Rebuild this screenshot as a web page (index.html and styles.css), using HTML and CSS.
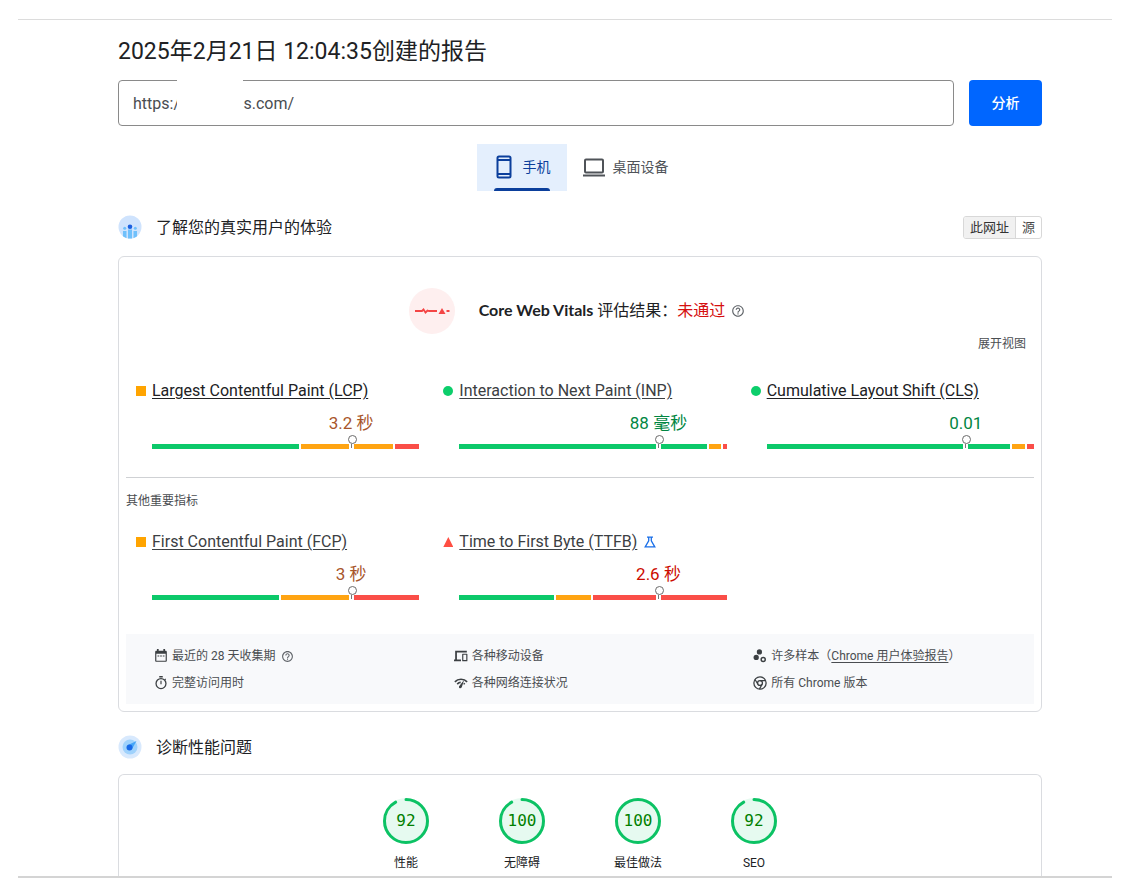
FILE: index.html
```html
<!DOCTYPE html>
<html lang="zh-CN">
<head>
<meta charset="utf-8">
<meta name="viewport" content="width=device-width, initial-scale=1">
<title>PageSpeed Insights</title>
<link rel="stylesheet" href="styles.css">
</head>
<body>
<svg class="defs" aria-hidden="true">
  <symbol id="help" viewBox="0 0 24 24"><path d="M11 18h2v-2h-2v2zm1-16C6.48 2 2 6.48 2 12s4.48 10 10 10 10-4.48 10-10S17.520 2 12 2zm0 18c-4.410 0-8-3.590-8-8s3.590-8 8-8 8 3.590 8 8-3.590 8-8 8zm0-14c-2.210 0-4 1.790-4 4h2c0-1.100.9-2 2-2s2 .9 2 2c0 2-3 1.750-3 5h2c0-2.250 3-2.500 3-5 0-2.210-1.790-4-4-4z"/></symbol>
</svg>
<main class="frame">
  <h1 class="title">2025年2月21日 12:04:35创建的报告</h1>
  <form class="search">
    <div class="field">
      <input class="url" type="text" aria-label="网址" value="https:/&nbsp;&nbsp;&nbsp;&nbsp;&nbsp;&nbsp;&nbsp;&nbsp;&nbsp;&nbsp;&nbsp;&nbsp;&nbsp;&nbsp;&nbsp;&nbsp;s.com/">
      <span class="redact"></span>
    </div>
    <button class="analyze" type="button">分析</button>
  </form>

  <div class="tabs" role="tablist">
    <button class="tab tab-active" type="button" role="tab" aria-selected="true">
      <svg class="tab-icon" viewBox="0 0 24 24" fill="none" stroke="currentColor" stroke-width="2"><rect x="5.500" y="1.500" width="13" height="21" rx="1.500"/><path d="M5.500 5h13M5.500 19h13"/></svg>
      <span>手机</span>
    </button>
    <button class="tab" type="button" role="tab" aria-selected="false">
      <svg class="tab-icon" viewBox="0 0 24 24" fill="none" stroke="currentColor" stroke-width="2"><rect x="3" y="4.500" width="18" height="13" rx="1"/><path d="M1 20.500h22"/></svg>
      <span>桌面设备</span>
    </button>
  </div>

  <header class="section-head">
    <svg class="section-icon" viewBox="0 0 24 24"><defs><clipPath id="disc"><circle cx="12" cy="12" r="11.500"/></clipPath></defs><circle cx="12" cy="12" r="11.500" fill="#cfe3fd"/><g clip-path="url(#disc)" fill="#6fc0fb"><path d="M5 16h3.500v8H5zM10 14.500h4V24h-4zM15.500 16H19v8h-3.500z"/><circle cx="6.700" cy="13.300" r="1.500"/><circle cx="17.300" cy="13.300" r="1.500"/></g><circle cx="12" cy="11.800" r="2.300" fill="#1a5fe0"/></svg>
    <h2 class="section-title">了解您的真实用户的体验</h2>
    <div class="scope">
      <button class="scope-btn scope-on" type="button">此网址</button>
      <button class="scope-btn" type="button">源</button>
    </div>
  </header>

  <section class="card">
    <div class="verdict">
      <svg class="verdict-icon" viewBox="0 0 46 46"><circle cx="23" cy="23" r="23" fill="#feefef"/><path d="M6 23h7l1.500-1.500 2 3 2-2 1.500.5h8" fill="none" stroke="#f44545" stroke-width="1.800"/><path d="M29.500 26l3.500-6 3.500 6z" fill="#f44545"/><path d="M37.500 22h3v2h-3z" fill="#f44545"/></svg>
      <p class="verdict-text"><span class="cwv">Core Web Vitals</span> 评估结果：<span class="fail">未通过</span></p>
      <svg class="help"><use href="#help"/></svg>
    </div>
    <div class="expand-row"><button class="expand" type="button">展开视图</button></div>

    <div class="metrics">
      <article class="metric">
        <i class="mark square"></i>
        <a class="name strong" href="#lcp">Largest Contentful Paint (LCP)</a>
        <div class="value orange">3.2 秒</div>
        <div class="bar"><i class="good" style="flex-grow:147"></i><i class="mid" style="flex-grow:92"></i><i class="bad" style="flex-grow:24"></i><span class="pin"></span></div>
      </article>
      <article class="metric">
        <i class="mark circle"></i>
        <a class="name" href="#inp">Interaction to Next Paint (INP)</a>
        <div class="value green">88 毫秒</div>
        <div class="bar"><i class="good" style="flex-grow:247"></i><i class="mid" style="flex-grow:12"></i><i class="bad" style="flex-grow:4"></i><span class="pin"></span></div>
      </article>
      <article class="metric">
        <i class="mark circle"></i>
        <a class="name strong" href="#cls">Cumulative Layout Shift (CLS)</a>
        <div class="value green">0.01</div>
        <div class="bar"><i class="good" style="flex-grow:243"></i><i class="mid" style="flex-grow:13"></i><i class="bad" style="flex-grow:7"></i><span class="pin"></span></div>
      </article>
    </div>

    <h3 class="other">其他重要指标</h3>

    <div class="metrics">
      <article class="metric">
        <i class="mark square"></i>
        <a class="name" href="#fcp">First Contentful Paint (FCP)</a>
        <div class="value orange">3 秒</div>
        <div class="bar"><i class="good" style="flex-grow:127"></i><i class="mid" style="flex-grow:71"></i><i class="bad" style="flex-grow:65"></i><span class="pin"></span></div>
      </article>
      <article class="metric">
        <i class="mark triangle"></i>
        <div class="name-row">
          <a class="name" href="#ttfb">Time to First Byte (TTFB)</a>
          <svg class="flask" viewBox="0 0 12 12" fill="none" stroke="#1a6fe8" stroke-width="1.300"><path d="M3 1.200h6M4.700 1.500v3.300L1.200 10.800h9.600L7.300 4.800V1.500"/></svg>
        </div>
        <div class="value red">2.6 秒</div>
        <div class="bar"><i class="good" style="flex-grow:95"></i><i class="mid" style="flex-grow:34"></i><i class="bad" style="flex-grow:134"></i><span class="pin"></span></div>
      </article>
    </div>

    <ul class="facts">
      <li class="fact">
        <svg class="fact-icon" viewBox="0 0 24 24"><path d="M20 3h-1V0h-3v3H8V0H5v3H4C2.900 3 2 3.900 2 5v15c0 1.100.9 2 2 2h16c1.100 0 2-.9 2-2V5c0-1.100-.9-2-2-2zm0 17H4V8h16v12zM6 11h3v2H6zm4.500 0h3v2h-3zm4.500 0h3v2h-3z"/></svg>
        <span>最近的 28 天收集期</span><svg class="help fact-help"><use href="#help"/></svg>
      </li>
      <li class="fact">
        <svg class="fact-icon" viewBox="0 0 24 24"><path d="M0 18h12v3H0zM2 3h20v3H5v13H2zM22 8h-7c-.6 0-1 .4-1 1v11c0 .6.4 1 1 1h7c.6 0 1-.4 1-1V9c0-.6-.4-1-1-1zm-1 11h-5v-9h5z"/></svg>
        <span>各种移动设备</span>
      </li>
      <li class="fact">
        <svg class="fact-icon" viewBox="0 0 24 24"><circle cx="11" cy="5" r="4.500"/><circle cx="5.500" cy="14.500" r="4.500"/><circle cx="17.500" cy="18" r="3.500" fill="none" stroke="#3c4043" stroke-width="2.500"/></svg>
        <span>许多样本（<a class="fact-link" href="#crux">Chrome 用户体验报告</a>）</span>
      </li>
      <li class="fact">
        <svg class="fact-icon" viewBox="0 0 24 24"><path d="M9 0h6v2.500H9zM11 8h2v6h-2z"/><path d="M18.500 6.500l1.500-1.500" stroke="#3c4043" stroke-width="2"/><circle cx="12" cy="13" r="8.500" fill="none" stroke="#3c4043" stroke-width="2.200"/></svg>
        <span>完整访问用时</span>
      </li>
      <li class="fact">
        <svg class="fact-icon" viewBox="0 0 24 24"><path class="hollow" d="M1.500 10C7 4 17 4 22.500 10M5.500 14c2-2.200 4-3 6-3M16.500 12.500l2 1.500" stroke="#3c4043" stroke-width="2.800"/><path d="M17.500 6.500l-4 12.500c-.5 1.600-2 2.300-3.400 1.800-1.400-.6-2-2-1.300-3.400z"/></svg>
        <span>各种网络连接状况</span>
      </li>
      <li class="fact">
        <svg class="fact-icon" viewBox="0 0 24 24" fill="none" stroke="#3c4043" stroke-width="2.200"><circle class="hollow" cx="12" cy="12" r="10.500"/><circle class="hollow" cx="12" cy="12" r="4.200"/><path class="hollow" d="M12 7.800h9.500M8.400 14.100L3.500 6M15.600 14.100L11 22.500"/></svg>
        <span>所有 Chrome 版本</span>
      </li>
    </ul>
  </section>

  <header class="section-head">
    <svg class="section-icon" viewBox="0 0 24 24"><circle cx="12" cy="12" r="11.500" fill="#d8e9fd"/><circle cx="12" cy="12" r="7.500" fill="#9fd2fc"/><path d="M18.500 6L14 14l-4-4z" fill="#45a5f7"/><circle cx="11.500" cy="12.500" r="3" fill="#1769e8"/></svg>
    <h2 class="section-title">诊断性能问题</h2>
  </header>

  <section class="card card-open">
    <div class="gauges">
      <a class="gauge" href="#performance"><span class="dial"><svg class="ring" viewBox="0 0 46 46"><circle cx="23" cy="23" r="21.500" pathLength="100" stroke-dasharray="92 8"/></svg><span class="score">92</span></span>性能</a>
      <a class="gauge" href="#accessibility"><span class="dial"><svg class="ring" viewBox="0 0 46 46"><circle cx="23" cy="23" r="21.500" pathLength="100" stroke-dasharray="92 8"/></svg><span class="score">100</span></span>无障碍</a>
      <a class="gauge" href="#practices"><span class="dial"><svg class="ring" viewBox="0 0 46 46"><circle cx="23" cy="23" r="21.500"/></svg><span class="score">100</span></span>最佳做法</a>
      <a class="gauge" href="#seo"><span class="dial"><svg class="ring" viewBox="0 0 46 46"><circle cx="23" cy="23" r="21.500" pathLength="100" stroke-dasharray="92 8"/></svg><span class="score">92</span></span>SEO</a>
    </div>
  </section>
</main>
</body>
</html>
```

FILE: styles.css
```css
* { box-sizing: border-box; }
body {
  margin: 19px 18px 0;
  background: #fff;
  color: #202124;
  font: 12px/18px Roboto, "Noto Sans CJK SC", sans-serif;
}
h1, h2, h3, p, ul { margin: 0; padding: 0; font-weight: 400; }
button, input { font: inherit; color: inherit; margin: 0; }
button { cursor: pointer; padding: 0; border: 0; background: none; }
a { color: inherit; }
.defs { position: absolute; width: 0; height: 0; }

.frame {
  padding: 16px 70px 0 100px;
  border-top: 1px solid #dcdcdc;
  border-bottom: 2px solid #d4d4d4;
}
.title { font-size: 23px; line-height: 32px; }

.search { display: flex; gap: 15px; margin-top: 12px; }
.field { position: relative; flex: 1; }
.url {
  display: block;
  width: 100%;
  height: 46px;
  padding: 0 14px;
  border: 1px solid #8a8a8a;
  border-radius: 4px;
  background: #fff;
  color: #4a4d51;
  font-size: 16px;
}
.redact { position: absolute; left: 59px; top: 0; width: 66px; height: 40px; background: #fff; }
.analyze {
  width: 73px;
  height: 46px;
  border-radius: 4px;
  background: #0066ff;
  color: #fff;
  font-size: 14px;
  font-weight: 500;
}

.tabs { display: flex; justify-content: center; margin: 18px 0 24px; }
.tab {
  display: flex;
  align-items: center;
  gap: 7px;
  height: 47px;
  padding: 0 15px 1px;
  color: #4f5358;
  font-size: 14px;
}
.tab-icon { width: 24px; height: 24px; }
.tab-active {
  position: relative;
  padding-right: 16px;
  background: #e4effd;
  color: #0b3f9c;
}
.tab-active::after {
  content: "";
  position: absolute;
  left: 17px;
  right: 17px;
  bottom: 0;
  height: 3px;
  border-radius: 3px 3px 0 0;
  background: #0b3f9c;
}

.section-head { display: flex; align-items: center; gap: 14px; height: 24px; }
.section-icon { width: 24px; height: 24px; }
.section-title { flex: 1; padding-top: 1px; font-size: 16px; line-height: 24px; }
.scope { display: flex; border: 1px solid #d8d8d8; border-radius: 3px; overflow: hidden; }
.scope-btn { height: 21px; padding: 0 6px; color: #4a4a4a; font-size: 13px; line-height: 21px; }
.scope-on { background: #f1f1f1; border-right: 1px solid #d8d8d8; color: #333; }

.card { margin: 17px 0 23px; padding: 31px 0 7px; border: 1px solid #dadce0; border-radius: 6px; }
.verdict { display: flex; align-items: center; justify-content: center; padding-right: 6px; }
.verdict-icon { width: 46px; height: 46px; margin-right: 24px; }
.verdict-text { padding-bottom: 1px; font-size: 16px; line-height: 24px; }
.cwv { font-family: Lato, sans-serif; font-weight: 700; }
.fail { color: #d50f0f; }
.help { width: 14px; height: 14px; margin-left: 6px; fill: #5f6368; }
.expand-row { display: flex; justify-content: flex-end; padding: 1px 15px 0 0; }
.expand { height: 18px; color: #4a4d51; }

.metrics { display: grid; grid-template-columns: repeat(3, 1fr); margin-top: 27px; }
.metric {
  display: grid;
  grid-template-columns: 10px 1fr;
  column-gap: 6px;
  align-items: center;
  padding: 0 7px 0 17px;
}
.mark { width: 10px; height: 10px; background: #ffa400; }
.circle { border-radius: 50%; background: #0cce6b; }
.triangle { background: #ff4e42; clip-path: polygon(50% 0, 100% 100%, 0 100%); }
.name { justify-self: start; color: #3c4043; font-size: 16px; line-height: 22px; text-underline-offset: 2px; }
.strong { color: #202124; }
.name-row { display: flex; align-items: center; gap: 7px; }
.flask { width: 12px; height: 12px; }
.value { grid-column: 2; padding: 9px 0 9px 49%; font-size: 17px; line-height: 24px; text-align: center; }
.orange { color: #a8562b; }
.green { color: #018642; }
.red { color: #cc0b00; }
.bar { position: relative; grid-column: 2; display: flex; gap: 2px; height: 5px; }
.good { flex: 1 1 0; background: #0cc96a; }
.mid { flex: 1 1 0; background: #ffa412; }
.bad { flex: 1 1 0; background: #fa4e48; }
.pin { position: absolute; left: calc(74% - 1px); top: 0; width: 5px; height: 5px; background: #fff; }
.pin::before {
  content: "";
  position: absolute;
  left: -1px;
  bottom: 5px;
  width: 7px;
  height: 7px;
  border: 1px solid #6b6b6b;
  border-radius: 50%;
}
.pin::after { content: ""; position: absolute; left: 2px; top: 0; width: 1px; height: 4px; background: #777; }

.other {
  margin: 28px 7px 0;
  padding-top: 14px;
  border-top: 1px solid #cfd1d4;
  color: #4a4d51;
  font-size: 12px;
  line-height: 18px;
}
.other + .metrics { margin-top: 21px; }

.facts {
  display: grid;
  grid-template-columns: repeat(3, 1fr);
  row-gap: 9px;
  margin: 34px 7px 0;
  padding: 13px 9px 12px 0;
  background: #f8f9fb;
  color: #4a4d51;
  list-style: none;
}
.fact { display: flex; align-items: center; gap: 4px; padding-left: 28px; white-space: nowrap; }
.fact-icon { width: 14px; height: 14px; fill: #3c4043; }
.hollow { fill: none; }
.fact-help { width: 13px; height: 13px; margin-left: 2px; }
.fact-link { text-underline-offset: 2px; }

.card-open { margin: 15px 0 0; padding: 23px 0 4px; border-bottom: 0; border-radius: 6px 6px 0 0; }
.gauges { display: flex; justify-content: center; gap: 20px; }
.gauge { display: flex; flex-direction: column; align-items: center; gap: 10px; width: 96px; text-decoration: none; }
.dial { display: grid; place-items: center; width: 46px; height: 46px; border-radius: 50%; background: #e6faf0; }
.ring { grid-area: 1 / 1; width: 46px; height: 46px; fill: none; stroke: #0cc264; stroke-width: 3; stroke-linecap: round; transform: rotate(-90deg); }
.score { grid-area: 1 / 1; color: #018000; font: 16px/20px "DejaVu Sans Mono", monospace; }
```
